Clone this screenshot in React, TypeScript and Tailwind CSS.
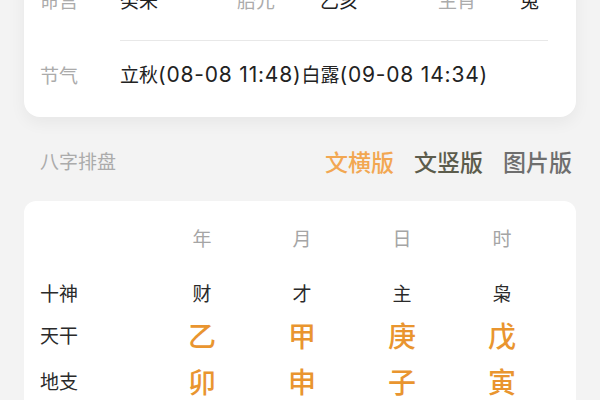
import React from "react";

const font = { fontFamily: '"Noto Sans CJK SC", "Noto Sans", sans-serif' };

function Num({ children }: { children: React.ReactNode }) {
  return (
    <span className="text-[21px] font-['Inter','Noto_Sans_CJK_SC',sans-serif] tracking-[0.8px]">{children}</span>
  );
}

export default function App() {
  const cols = ["年", "月", "日", "时"];
  const shishen = ["财", "才", "主", "枭"];
  const tiangan = ["乙", "甲", "庚", "戊"];
  const dizhi = ["卯", "申", "子", "寅"];
  return (
    <div className="w-[600px] h-[400px] overflow-hidden bg-[#f3f3f3]" style={font}>
      <div className="mx-6 -mt-[40px] bg-white rounded-b-2xl shadow-[0_6px_16px_rgba(0,0,0,0.05)] pb-[8px]">
        <div className="flex items-center h-[80px] px-4 text-[19px]">
          <div className="w-[80px] text-[#ababab]">命宫</div>
          <div className="w-[117px] text-[#222]">癸未</div>
          <div className="w-[83px] text-[#ababab]">胎元</div>
          <div className="w-[118px] text-[#222]">乙亥</div>
          <div className="w-[82px] text-[#ababab]">生肖</div>
          <div className="text-[#222]">兔</div>
        </div>
        <div className="ml-[96px] mr-[28px] h-px bg-[#e8e8e8]" />
        <div className="flex items-center h-[68px] px-4 text-[19px]">
          <div className="w-[80px] text-[#ababab]">节气</div>
          <div className="text-[#222] whitespace-nowrap">
            立秋<Num>(08-08 11:48)</Num>白露<Num>(09-08 14:34)</Num>
          </div>
        </div>
      </div>
      <div className="flex items-center justify-between h-[84px] pl-10 pr-[28px] pt-[4px]">
        <div className="text-[19px] text-[#ababab]">八字排盘</div>
        <div className="flex gap-[20px] text-[23px] font-medium">
          <span className="text-[#f2a752]">文横版</span>
          <span className="text-[#5c5c4c]">文竖版</span>
          <span className="text-[#6e6e6e]">图片版</span>
        </div>
      </div>
      <div className="mx-6 bg-white rounded-t-xl px-4 h-[220px]">
        <div className="grid grid-cols-[112px_100px_100px_100px_100px] items-center h-[74px] text-[19px] text-[#a5a5a5]">
          <div />
          {cols.map((c) => (
            <div key={c} className="text-center">{c}</div>
          ))}
        </div>
        <div className="grid grid-cols-[112px_100px_100px_100px_100px] items-center h-[36px] text-[19px] text-[#2a2a2a]">
          <div>十神</div>
          {shishen.map((c) => (
            <div key={c} className="text-center">{c}</div>
          ))}
        </div>
        <div className="grid grid-cols-[112px_100px_100px_100px_100px] items-center h-[48px]">
          <div className="text-[19px] text-[#2a2a2a]">天干</div>
          {tiangan.map((c) => (
            <div key={c} className="text-center text-[28px] font-medium text-[#e9952f]">{c}</div>
          ))}
        </div>
        <div className="grid grid-cols-[112px_100px_100px_100px_100px] items-center h-[44px]">
          <div className="text-[19px] text-[#2a2a2a]">地支</div>
          {dizhi.map((c) => (
            <div key={c} className="text-center text-[28px] font-medium text-[#e9952f]">{c}</div>
          ))}
        </div>
      </div>
    </div>
  );
}
